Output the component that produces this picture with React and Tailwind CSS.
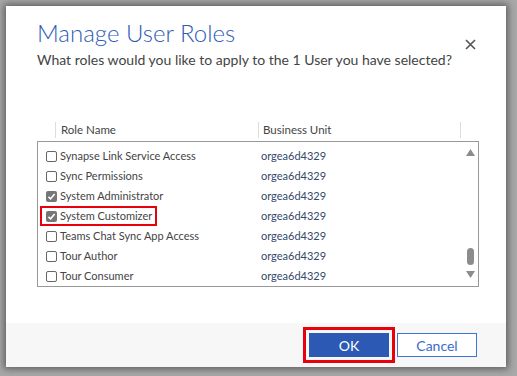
const roles = [
  { name: "Sync Integration", checked: false },
  { name: "Synapse Link Service Access", checked: false },
  { name: "Sync Permissions", checked: false },
  { name: "System Administrator", checked: true },
  { name: "System Customizer", checked: true, marked: true },
  { name: "Teams Chat Sync App Access", checked: false },
  { name: "Tour Author", checked: false },
  { name: "Tour Consumer", checked: false },
];

const font = { fontFamily: '"Segoe UI", Lato, "Liberation Sans", sans-serif' };

const Checkbox = ({ checked }) =>
  checked ? (
    <span className="flex h-[11px] w-[11px] items-center justify-center rounded-[2px] bg-[#767676]">
      <svg width="9" height="9" viewBox="0 0 9 9">
        <path d="M1.5 4.8 L3.6 6.8 L7.6 2" fill="none" stroke="#fff" strokeWidth="1.6" />
      </svg>
    </span>
  ) : (
    <span className="h-[11px] w-[11px] rounded-[2px] border border-[#666] bg-white" />
  );

const App = () => {
  return (
    <div className="h-[376px] w-[517px] overflow-hidden bg-[#a8a8a8] pl-[6px] pt-[6px]" style={font}>
      <div className="flex h-[361px] w-[500px] flex-col bg-white shadow-[0_0_7px_2px_rgba(0,0,0,0.45)]">
        {/* header */}
        <div className="flex items-start justify-between pl-[31px] pr-[30px] pt-[11px]">
          <div>
            <h1 className="text-[24px] font-light leading-[32px] text-[#2f5cb6]">Manage User Roles</h1>
            <p className="mt-[2px] whitespace-nowrap text-[14px] leading-[18px] text-[#444]">
              What roles would you like to apply to the 1 User you have selected?
            </p>
          </div>
          <button className="mt-[22px] text-[#555]">
            <svg width="11" height="11" viewBox="0 0 11 11">
              <path d="M1 1 L10 10 M10 1 L1 10" stroke="#555" strokeWidth="1.6" />
            </svg>
          </button>
        </div>

        {/* roles table */}
        <div className="mt-[50px] pl-[31px] pr-[27px]">
          <div className="flex h-[22px] items-center text-[11.5px] text-[#444]">
            <div className="w-[18px]" />
            <div className="flex h-[16px] w-[203px] items-center border-l border-[#ddd] pl-[5px]">Role Name</div>
            <div className="flex h-[16px] w-[202px] items-center border-l border-[#ddd] pl-[4px]">Business Unit</div>
            <div className="h-[16px] border-l border-[#ddd]" />
          </div>
          <div className="flex h-[146px] border border-[#999]">
            <div className="flex-1 overflow-hidden">
              <div className="-mt-[16px]">
                {roles.map((role) => (
                  <div key={role.name} className="flex h-[20px] items-center text-[11px]">
                    <div className="w-[223px] pl-[2px]">
                      <span
                        className={`inline-flex h-[20px] items-center gap-[3px] border-2 pl-[4px] pr-[3px] text-[#444] ${
                          role.marked ? "border-[#e8000b]" : "border-transparent"
                        }`}
                      >
                        <Checkbox checked={role.checked} />
                        {role.name}
                      </span>
                    </div>
                    <div className="text-[#34486a]">orgea6d4329</div>
                  </div>
                ))}
              </div>
            </div>
            <div className="flex w-[16px] flex-col items-center pt-[7px] pb-[8px]">
              <svg width="9" height="7" viewBox="0 0 9 7">
                <path d="M4.5 0 L9 7 L0 7 Z" fill="#8c8c8c" />
              </svg>
              <div className="mt-auto h-[17px] w-[7px] rounded-full bg-[#8c8c8c]" />
              <svg className="mt-[6px]" width="9" height="7" viewBox="0 0 9 7">
                <path d="M0 0 L9 0 L4.5 7 Z" fill="#8c8c8c" />
              </svg>
            </div>
          </div>
        </div>

        {/* footer */}
        <div className="mt-auto flex h-[44px] items-center justify-end gap-[2px] bg-[#f7f7f7] pr-[29px]">
          <div className="border-[3px] border-[#e8000b] p-[3px]">
            <button className="h-[24px] w-[80px] bg-[#2c59b4] text-[14px] text-white">OK</button>
          </div>
          <button className="h-[24px] w-[80px] border border-[#3a76d6] bg-white text-[14px] text-[#3a6cc8]">
            Cancel
          </button>
        </div>
      </div>
    </div>
  );
};

export default App;
